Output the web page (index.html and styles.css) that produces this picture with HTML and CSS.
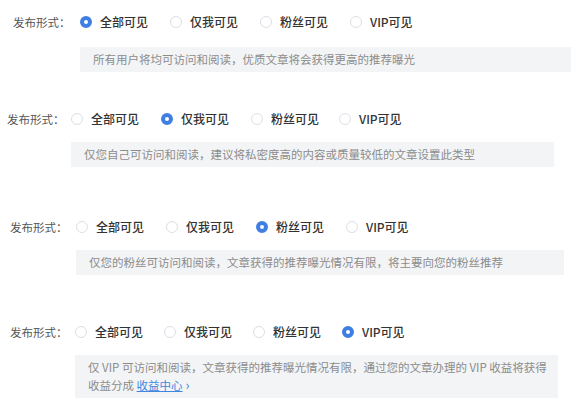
FILE: index.html
```html
<!DOCTYPE html>
<html lang="zh-CN">
<head>
  <meta charset="UTF-8">
  <title>发布形式</title>
  <link rel="stylesheet" href="styles.css">
</head>
<body>
  <div class="field field-all">
    <span class="label">发布形式：</span>
    <div class="options">
      <span class="option checked"><i class="radio"></i>全部可见</span>
      <span class="option"><i class="radio"></i>仅我可见</span>
      <span class="option"><i class="radio"></i>粉丝可见</span>
      <span class="option"><i class="radio"></i>VIP可见</span>
    </div>
    <p class="tip">所有用户将均可访问和阅读，优质文章将会获得更高的推荐曝光</p>
  </div>

  <div class="field field-self">
    <span class="label">发布形式：</span>
    <div class="options">
      <span class="option"><i class="radio"></i>全部可见</span>
      <span class="option checked"><i class="radio"></i>仅我可见</span>
      <span class="option"><i class="radio"></i>粉丝可见</span>
      <span class="option"><i class="radio"></i>VIP可见</span>
    </div>
    <p class="tip">仅您自己可访问和阅读，建议将私密度高的内容或质量较低的文章设置此类型</p>
  </div>

  <div class="field field-fans">
    <span class="label">发布形式：</span>
    <div class="options">
      <span class="option"><i class="radio"></i>全部可见</span>
      <span class="option"><i class="radio"></i>仅我可见</span>
      <span class="option checked"><i class="radio"></i>粉丝可见</span>
      <span class="option"><i class="radio"></i>VIP可见</span>
    </div>
    <p class="tip">仅您的粉丝可访问和阅读，文章获得的推荐曝光情况有限，将主要向您的粉丝推荐</p>
  </div>

  <div class="field field-vip">
    <span class="label">发布形式：</span>
    <div class="options">
      <span class="option"><i class="radio"></i>全部可见</span>
      <span class="option"><i class="radio"></i>仅我可见</span>
      <span class="option"><i class="radio"></i>粉丝可见</span>
      <span class="option checked"><i class="radio"></i>VIP可见</span>
    </div>
    <p class="tip"><span class="nowrap">仅 VIP 可访问和阅读，文章获得的推荐曝光情况有限，通过您的文章办理的 VIP 收益将获得</span> 收益分成 <a href="#" class="link">收益中心</a><span class="arrow">›</span></p>
  </div>
</body>
</html>
```

FILE: styles.css
```css
* {
  box-sizing: border-box;
  margin: 0;
  padding: 0;
}

body {
  font-family: "Noto Sans CJK SC", "Noto Sans", sans-serif;
  font-size: 12px;
  color: #333;
  background-color: #fff;
}

.field {
  display: grid;
  grid-template-columns: 67px auto;
  align-items: center;
}

.label {
  color: #555;
  font-size: 11.5px;
  line-height: 20px;
  white-space: nowrap;
}

.options {
  display: flex;
  height: 20px;
  align-items: center;
}

.option {
  display: flex;
  align-items: center;
  width: 90px;
  font-weight: 500;
  color: #333;
  line-height: 20px;
}

.radio {
  width: 12px;
  height: 12px;
  border: 1px solid #dcdfe6;
  border-radius: 50%;
  margin-right: 8px;
  background-color: #fff;
}

.option.checked .radio {
  border: 4px solid #3f7fe3;
  background-color: #fff;
}

.tip {
  grid-column: 2;
  margin-top: 13px;
  padding: 4px 12px 4px 13px;
  font-size: 11.5px;
  line-height: 17px;
  color: #8c8c8c;
  background-color: #f3f4f6;
}

.nowrap {
  white-space: nowrap;
}

.link {
  color: #3f86e0;
  text-decoration: underline;
}

.arrow {
  color: #3f86e0;
  margin-left: 3px;
  font-size: 13px;
}

.field-all {
  padding: 12px 0 0 13px;
}

.field-all .tip {
  width: 491px;
  margin-top: 15px;
}

.field-self {
  padding: 37px 0 0 7px;
  grid-template-columns: 64px auto;
}

.field-self .tip {
  width: 483px;
}

.field-self .option:nth-child(3) {
  width: 88px;
}

.field-fans {
  padding: 50px 0 0 10px;
  grid-template-columns: 66px auto;
}

.field-fans .tip {
  width: 488px;
}

.field-vip {
  padding: 47px 0 0 10px;
  grid-template-columns: 65px auto;
}

.field-vip .tip {
  width: 483px;
}

.field-vip .option {
  width: 89px;
}
```
